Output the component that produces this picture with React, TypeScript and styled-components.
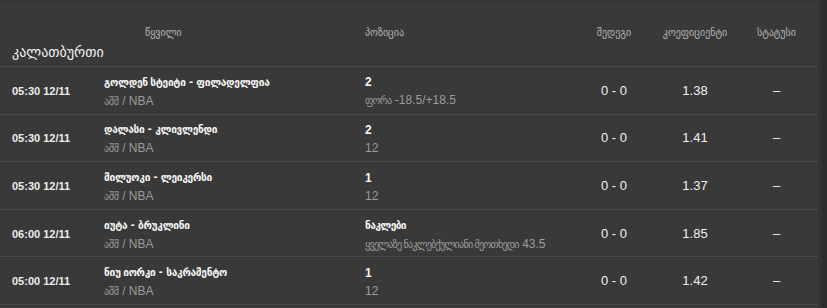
import React from "react";
import styled, { createGlobalStyle } from "styled-components";

const Global = createGlobalStyle`
  html, body { margin: 0; padding: 0; background: #2e2e2e; }
  body { font-family: "Liberation Sans", "DejaVu Sans", Arial, sans-serif; }
  * { box-sizing: border-box; }
`;

const Page = styled.div`
  display: flex;
  width: 827px;
  height: 308px;
  overflow: hidden;
  background: #2e2e2e;
`;

const Panel = styled.div`
  width: 818px;
  background: #393939;
  border-top: 1px solid #333;
  display: flex;
  flex-direction: column;
`;

const Scroll = styled.div`
  width: 5px;
  background: #333333;
  border-right: 1px solid #2a2a2a;
`;

const cols = "104px 261px 209px 80px 82px 81px";

const HeadRow = styled.div`
  display: grid;
  grid-template-columns: ${cols};
  height: 66px;
  border-bottom: 1px solid #4b4b4b;
`;

const Title = styled.div`
  align-self: end;
  padding: 0 0 6px 12px;
  font-size: 14px;
  color: #f2f2f2;
  white-space: nowrap;
`;

const HeadLabel = styled.div<{ $align?: "left" | "center"; $pad?: number }>`
  align-self: start;
  padding-top: 26px;
  padding-left: ${(p) => p.$pad ?? 0}px;
  text-align: ${(p) => p.$align ?? "center"};
  font-size: 10px;
  color: #b5b5b5;
  white-space: nowrap;
`;

const Row = styled.div`
  display: grid;
  grid-template-columns: ${cols};
  height: 47.6px;
  border-bottom: 1px solid #4b4b4b;
  align-items: center;
`;

const Time = styled.div`
  padding: 1px 0 0 12px;
  font-size: 11px;
  font-weight: bold;
  color: #ececec;
  white-space: nowrap;
`;

const Stack = styled.div`
  display: flex;
  flex-direction: column;
  gap: 4px;
  padding-top: 3px;
  white-space: nowrap;
`;

const Main = styled.div`
  font-size: 12px;
  line-height: 14px;
  color: #f4f4f4;
  font-weight: bold;
`;

const Sub = styled.div`
  font-size: 12px;
  line-height: 14px;
  color: #9c9c9c;
`;

const Geo = styled.span<{ $scale: number; $track: number }>`
  font-size: ${(p) => p.$scale}em;
  letter-spacing: ${(p) => p.$track}px;
`;

const Center = styled.div`
  text-align: center;
  font-size: 13px;
  color: #f0f0f0;
  white-space: nowrap;
`;

const GEO_RUN = /([\u10A0-\u10FF]+(?:\s+[\u10A0-\u10FF]+)*)/;

function Text({ value, scale, track }: { value: string; scale: number; track: number }) {
  const parts = value.split(GEO_RUN);
  return (
    <>
      {parts.map((p, i) =>
        GEO_RUN.test(p) ? (
          <Geo key={i} $scale={scale} $track={track}>
            {p}
          </Geo>
        ) : (
          <React.Fragment key={i}>{p}</React.Fragment>
        )
      )}
    </>
  );
}

type Bet = {
  time: string;
  match: string;
  league: string;
  pick: string;
  market: string;
  score: string;
  odd: string;
  status: string;
};

const bets: Bet[] = [
  { time: "05:30 12/11", match: "გოლდენ სტეიტი - ფილადელფია", league: "აშშ / NBA", pick: "2", market: "ფორა -18.5/+18.5", score: "0 - 0", odd: "1.38", status: "–" },
  { time: "05:30 12/11", match: "დალასი - კლივლენდი", league: "აშშ / NBA", pick: "2", market: "12", score: "0 - 0", odd: "1.41", status: "–" },
  { time: "05:30 12/11", match: "მილუოკი - ლეიკერსი", league: "აშშ / NBA", pick: "1", market: "12", score: "0 - 0", odd: "1.37", status: "–" },
  { time: "06:00 12/11", match: "იუტა - ბრუკლინი", league: "აშშ / NBA", pick: "ნაკლები", market: "ყველაზე ნაკლებქულიანი მეოთხედი 43.5", score: "0 - 0", odd: "1.85", status: "–" },
  { time: "05:00 12/11", match: "ნიუ იორკი - საკრამენტო", league: "აშშ / NBA", pick: "1", market: "12", score: "0 - 0", odd: "1.42", status: "–" },
];

export default function App() {
  return (
    <>
      <Global />
      <Page>
        <Panel>
          <HeadRow>
            <Title>კალათბურთი</Title>
            <HeadLabel $align="left" $pad={41}>წყვილი</HeadLabel>
            <HeadLabel $align="left">პოზიცია</HeadLabel>
            <HeadLabel>შედეგი</HeadLabel>
            <HeadLabel>კოეფიციენტი</HeadLabel>
            <HeadLabel>სტატუსი</HeadLabel>
          </HeadRow>
          {bets.map((b, i) => (
            <Row key={i}>
              <Time>{b.time}</Time>
              <Stack>
                <Main>
                  <Text value={b.match} scale={0.85} track={-0.3} />
                </Main>
                <Sub>
                  <Text value={b.league} scale={0.85} track={-0.3} />
                </Sub>
              </Stack>
              <Stack>
                <Main>
                  <Text value={b.pick} scale={0.85} track={-0.6} />
                </Main>
                <Sub>
                  <Text value={b.market} scale={0.85} track={-0.8} />
                </Sub>
              </Stack>
              <Center>{b.score}</Center>
              <Center>{b.odd}</Center>
              <Center>{b.status}</Center>
            </Row>
          ))}
        </Panel>
        <Scroll />
      </Page>
    </>
  );
}
